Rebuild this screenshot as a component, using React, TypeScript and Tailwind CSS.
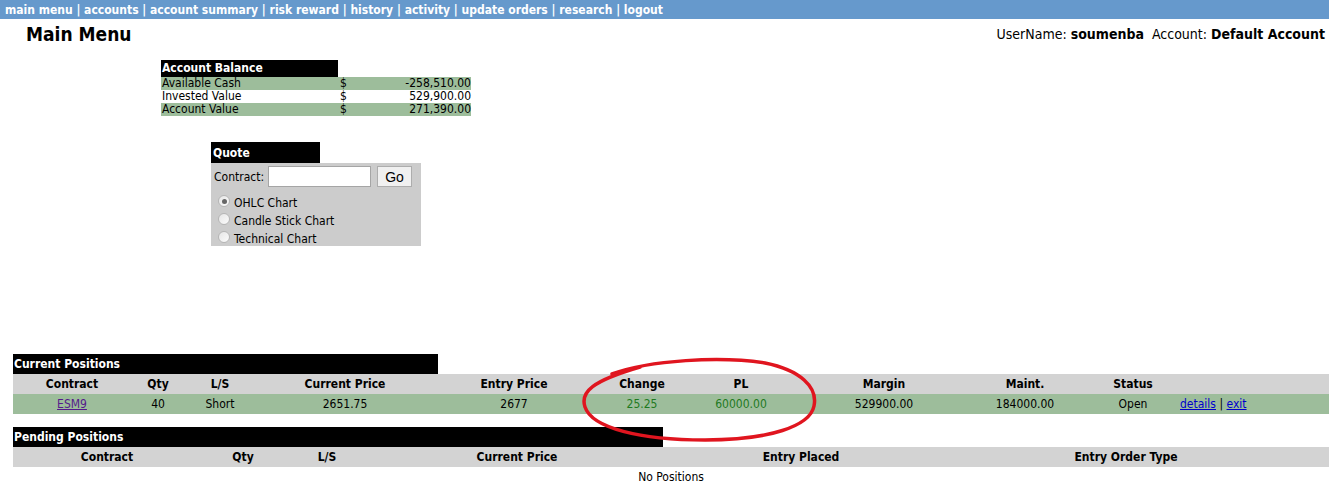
import React from "react";

const navItems = [
  "main menu",
  "accounts",
  "account summary",
  "risk reward",
  "history",
  "activity",
  "update orders",
  "research",
  "logout",
];

const balances = [
  { label: "Available Cash", amount: "-258,510.00", shaded: true },
  { label: "Invested Value", amount: "529,900.00", shaded: false },
  { label: "Account Value", amount: "271,390.00", shaded: true },
];

const chartTypes = ["OHLC Chart", "Candle Stick Chart", "Technical Chart"];

// column layout for the positions grid
const posCols =
  "grid grid-cols-[118px_54px_70px_180px_158px_98px_100px_186px_109px_94px_1fr]";
const pendCols = "grid grid-cols-[188px_84px_84px_296px_272px_378px_1fr]";

const Radio = ({ checked }: { checked?: boolean }) => (
  <span className="flex h-[12px] w-[12px] items-center justify-center rounded-full border border-[#b5b5b5] bg-gradient-to-br from-[#e6e6e6] to-[#fbfbfb]">
    {checked && <span className="h-[5px] w-[5px] rounded-full bg-[#666]" />}
  </span>
);

const SectionTitle = ({ title, width }: { title: string; width: string }) => (
  <div
    className={`${width} flex h-[20px] items-center bg-black pl-[1px] text-[12px] font-bold text-white`}
  >
    {title}
  </div>
);

export default function App() {
  return (
    <div className="relative h-[493px] w-[1329px] overflow-hidden bg-white font-[family-name:'DejaVu_Sans_Condensed','DejaVu_Sans',sans-serif] text-black">
      {/* top nav */}
      <div className="flex h-[19px] items-center bg-[#6699cc] pl-[5px] text-[12px] font-bold text-white">
        {navItems.map((item, i) => (
          <span key={item} className="whitespace-pre">
            {i > 0 && " | "}
            {item}
          </span>
        ))}
      </div>

      {/* title + user info */}
      <div className="flex h-[29px] items-center justify-between pl-[26px] pr-[4px] pt-[1px]">
        <h1 className="text-[19px] font-bold">Main Menu</h1>
        <div className="text-[14px] whitespace-pre">
          UserName: <b>soumenba</b>  Account: <b>Default Account</b>
        </div>
      </div>

      {/* account balance */}
      <div className="ml-[161px] mt-[12px] w-[310px] text-[12px] leading-[13px]">
        <div className="flex h-[17px] w-[177px] items-center bg-black pl-[1px] font-bold text-white">
          Account Balance
        </div>
        {balances.map((b) => (
          <div
            key={b.label}
            className={`grid h-[13px] grid-cols-[178px_1fr_auto] items-end pl-[1px] ${
              b.shaded ? "bg-[#9dbd9b]" : ""
            }`}
          >
            <span>{b.label}</span>
            <span>$</span>
            <span className="text-right">{b.amount}</span>
          </div>
        ))}
      </div>

      {/* quote */}
      <div className="ml-[211px] mt-[26px] w-[210px] text-[12px]">
        <div className="flex h-[21px] w-[109px] items-center bg-black pl-[2px] font-bold text-white">
          Quote
        </div>
        <div className="h-[83px] bg-[#cccccc] pt-[3px]">
          <div className="flex items-center pl-[3px]">
            <span>Contract:</span>
            <input className="ml-[4px] h-[21px] w-[103px] border border-[#a5a5a5] bg-white" />
            <button className="ml-[6px] h-[21px] w-[35px] border border-[#adadad] bg-[#f0f0f0] font-['Liberation_Sans',sans-serif] text-[14px]">
              Go
            </button>
          </div>
          <div className="mt-[5px]">
            {chartTypes.map((c, i) => (
              <div key={c} className="flex h-[18px] items-center gap-[4px] pl-[7px]">
                <Radio checked={i === 0} />
                <span className="pt-[3px]">{c}</span>
              </div>
            ))}
          </div>
        </div>
      </div>

      {/* current positions */}
      <div className="ml-[13px] mt-[108px] text-[12px]">
        <SectionTitle title="Current Positions" width="w-[425px]" />
        <div className={`${posCols} h-[20px] items-center bg-[#d3d3d3] text-center font-bold`}>
          <span>Contract</span>
          <span>Qty</span>
          <span>L/S</span>
          <span>Current Price</span>
          <span>Entry Price</span>
          <span>Change</span>
          <span>PL</span>
          <span>Margin</span>
          <span className="pr-[13px]">Maint.</span>
          <span>Status</span>
          <span />
        </div>
        <div className={`${posCols} h-[20px] items-center bg-[#9dbd9b] text-center`}>
          <a href="#" className="text-[#551a8b] underline">
            ESM9
          </a>
          <span>40</span>
          <span>Short</span>
          <span>2651.75</span>
          <span>2677</span>
          <span className="text-[#1f7a1f]">25.25</span>
          <span className="text-[#1f7a1f]">60000.00</span>
          <span>529900.00</span>
          <span className="pr-[13px]">184000.00</span>
          <span>Open</span>
          <span className="text-left">
            <a href="#" className="text-[#0000cc] underline">
              details
            </a>{" "}
            |{" "}
            <a href="#" className="text-[#0000cc] underline">
              exit
            </a>
          </span>
        </div>
      </div>

      {/* pending positions */}
      <div className="ml-[13px] mt-[13px] text-[12px]">
        <SectionTitle title="Pending Positions" width="w-[650px]" />
        <div className={`${pendCols} h-[20px] items-center bg-[#d3d3d3] text-center font-bold`}>
          <span>Contract</span>
          <span>Qty</span>
          <span>L/S</span>
          <span>Current Price</span>
          <span>Entry Placed</span>
          <span>Entry Order Type</span>
          <span />
        </div>
        <div className="flex h-[20px] items-center justify-center">No Positions</div>
      </div>

      {/* red marker ring around change / PL */}
      <svg
        className="pointer-events-none absolute left-0 top-0"
        width="1329"
        height="493"
        viewBox="0 0 1329 493"
      >
        <path
          d="M612 374 C650 360 720 356 765 363 C800 370 818 387 814 406 C810 426 770 440 705 440 C640 440 592 428 585 407 C580 392 592 381 640 367"
          fill="none"
          stroke="#e0151f"
          strokeWidth="3.5"
          strokeLinecap="round"
        />
      </svg>
    </div>
  );
}
